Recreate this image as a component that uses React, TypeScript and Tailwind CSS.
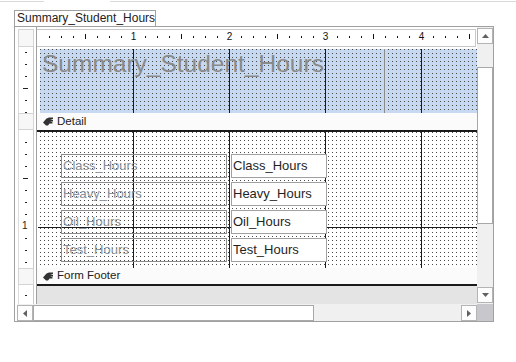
const topMarks = Array.from({ length: 36 }, (_, i) => i + 1);
const headerMarks = [5, 17, 29, 41, 53, 65];
const detailMarks = [12, 24, 36, 48, 60, 72, 84, 96, 108, 120, 132];
const gridX = [96, 192, 288, 384];
const fields = ["Class_Hours", "Heavy_Hours", "Oil_Hours", "Test_Hours"];

const dots =
  "bg-[image:conic-gradient(from_270deg_at_1px_1px,#4a4a4a_90deg,transparent_0)] bg-[length:4px_4px]";

function SectionIcon() {
  return (
    <svg width="10" height="9" viewBox="0 0 10 9" className="shrink-0">
      <path
        d="M0 5.5 L3.5 1.5 L6 0.5 H10 V2 H7.2 L10 3 V4.5 H7.2 L9.5 5.2 V6.6 H6.6 L5 8.6 H3 Z"
        fill="#333"
      />
    </svg>
  );
}

function Arrow({ dir }: { dir: "up" | "down" | "left" | "right" }) {
  const pts = {
    up: "0,4 3.5,0 7,4",
    down: "0,0 7,0 3.5,4",
    left: "4,0 4,7 0,3.5",
    right: "0,0 4,3.5 0,7",
  }[dir];
  const vertical = dir === "up" || dir === "down";
  return (
    <svg width={vertical ? 7 : 4} height={vertical ? 4 : 7}>
      <polygon points={pts} fill="#606060" />
    </svg>
  );
}

function LeftRuler() {
  return (
    <div className="w-[21px] pl-[3px] pr-[2px] pt-[2px] flex flex-col">
      <div className="h-[18px] border border-[#d4d4d4] bg-[#f7f7f7]" />
      <div className="relative h-[66px] border-x border-l-[#dcdcdc] border-r-[#c8c8c8]">
        {headerMarks.map((y, i) => (
          <div
            key={y}
            className={`absolute h-px bg-[#222] ${i === 3 ? "w-[5px] left-[4px]" : "w-[2px] left-[6px]"}`}
            style={{ top: y }}
          />
        ))}
      </div>
      <div className="h-[17px] border border-[#d4d4d4] bg-[#f7f7f7]" />
      <div className="relative h-[138px] border-x border-l-[#dcdcdc] border-r-[#c8c8c8]">
        {detailMarks.map((y) =>
          y === 96 ? (
            <div key={y} className="absolute left-[3px] text-[10px] leading-[10px] text-[#222]" style={{ top: y - 5 }}>
              1
            </div>
          ) : (
            <div
              key={y}
              className={`absolute h-px bg-[#222] ${y === 48 ? "w-[5px] left-[4px]" : "w-[2px] left-[6px]"}`}
              style={{ top: y }}
            />
          )
        )}
      </div>
      <div className="h-[17px] border border-[#d4d4d4] bg-[#f7f7f7]" />
      <div className="relative flex-1 border-x border-l-[#dcdcdc] border-r-[#c8c8c8]">
        <div className="absolute top-[10px] left-[6px] w-[2px] h-px bg-[#222]" />
      </div>
    </div>
  );
}

function TopRuler() {
  return (
    <div className="relative h-[18px] w-[439px] border border-l-0 border-[#c8c8c8] bg-white">
      {topMarks.map((k) =>
        k % 8 === 0 ? (
          <div
            key={k}
            className="absolute top-[2px] -translate-x-1/2 text-[10px] leading-[10px] text-[#111]"
            style={{ left: 12 * k + 0.5 }}
          >
            {k / 8}
          </div>
        ) : (
          <div
            key={k}
            className={`absolute w-px bg-[#111] ${k % 4 === 0 ? "top-[4px] h-[5px]" : "top-[6px] h-[2px]"}`}
            style={{ left: 12 * k }}
          />
        )
      )}
    </div>
  );
}

function SectionBar({ label, tall }: { label: string; tall?: boolean }) {
  return (
    <div
      className={`${tall ? "h-[19px]" : "h-[18px]"} border-b-2 border-[#1a1a1a] bg-[#fbfbfb] flex items-center gap-[4px] pl-[6px] text-[11.5px] text-[#222]`}
    >
      <SectionIcon />
      <span>{label}</span>
    </div>
  );
}

function Header() {
  return (
    <div className="h-[66px] pt-[2px] pl-[3px]">
      <div className={`relative h-[64px] bg-[#c6d9f1] ${dots}`}>
        {gridX.map((x) => (
          <div key={x} className="absolute top-0 bottom-0 w-px bg-[#1a1a1a]" style={{ left: x - 3 }} />
        ))}
        <div className="absolute top-0 bottom-0 left-[344px] w-px bg-[#8c8c8c]" />
        <div className="absolute left-[2px] top-[3px] text-[24.5px] leading-[24px] text-[#8a8a8a]">
          Summary_Student_Hours
        </div>
      </div>
    </div>
  );
}

function Detail() {
  return (
    <div className="relative h-[136px]">
      <div className={`absolute inset-y-0 left-[3px] right-0 bg-white ${dots}`} />
      {gridX.map((x) => (
        <div key={x} className="absolute top-0 bottom-0 w-px bg-[#1a1a1a]" style={{ left: x }} />
      ))}
      <div className="absolute left-px right-0 top-[95px] h-px bg-[#1a1a1a]" />
      <div className="absolute left-[24px] top-[22px] flex flex-col gap-[4px]">
        {fields.map((f) => (
          <div key={f} className="flex gap-[4px]">
            <div className="w-[166px] h-[24px] border border-[#8c8c8c] pl-px text-[13px] leading-[22px] text-[#8a909c]">
              {f}
            </div>
            <div className="w-[96px] h-[24px] border border-[#a0a0a0] bg-white pl-px text-[13px] leading-[22px] text-[#1f1f1f]">
              {f}
            </div>
          </div>
        ))}
      </div>
    </div>
  );
}

function VScroll() {
  return (
    <div className="w-[16px] bg-[#f0f0f0] flex flex-col pt-px pb-px">
      <div className="h-[16px] border border-[#b4b4b4] bg-[#fdfdfd] flex items-center justify-center">
        <Arrow dir="up" />
      </div>
      <div className="mt-[23px] h-[157px] border border-[#a8a8a8] bg-white" />
      <div className="mt-auto h-[16px] border border-[#b4b4b4] bg-[#fdfdfd] flex items-center justify-center">
        <Arrow dir="down" />
      </div>
    </div>
  );
}

function HScroll() {
  return (
    <div className="flex h-[17px] bg-[#f0f0f0]">
      <div className="w-[2px] bg-white" />
      <div className="w-[16px] mt-px h-[16px] border border-[#b4b4b4] bg-[#fdfdfd] flex items-center justify-center">
        <Arrow dir="left" />
      </div>
      <div className="w-[281px] mt-px h-[16px] border border-[#a8a8a8] bg-white" />
      <div className="flex-1" />
      <div className="w-[16px] mt-px h-[16px] border border-[#b4b4b4] bg-[#fdfdfd] flex items-center justify-center">
        <Arrow dir="right" />
      </div>
      <div className="w-[16px] bg-[#c8c8cc]" />
    </div>
  );
}

export default function App() {
  return (
    <div className="w-[516px] h-[362px] bg-white overflow-hidden font-['Liberation_Sans',Arial,sans-serif] text-[#1f1f1f]">
      {/* window strip */}
      <div className="flex h-[3px] pt-px">
        <div className="w-[44px] h-px bg-[#d9d9d9]" />
        <div className="ml-[66px] flex-1 h-px bg-[#d9d9d9]" />
      </div>

      {/* document tab */}
      <div className="ml-[14px] mt-[7px] w-[142px] h-[16px] border border-b-0 border-[#a0a0a0] pl-[2px] text-[12px] leading-[15px] text-[#222]">
        Summary_Student_Hours
      </div>

      {/* design frame */}
      <div className="ml-[14px] w-[480px] h-[296px] border border-[#a0a0a0] flex flex-col">
        <div className="flex h-[277px]">
          <LeftRuler />
          <div className="w-[441px] border-l border-[#a0a0a0] pt-[2px] flex flex-col">
            <TopRuler />
            <Header />
            <SectionBar label="Detail" tall />
            <Detail />
            <SectionBar label="Form Footer" />
            <div className="h-[18px] bg-[#e4e4e4]" />
          </div>
          <VScroll />
        </div>
        <HScroll />
      </div>
    </div>
  );
}
